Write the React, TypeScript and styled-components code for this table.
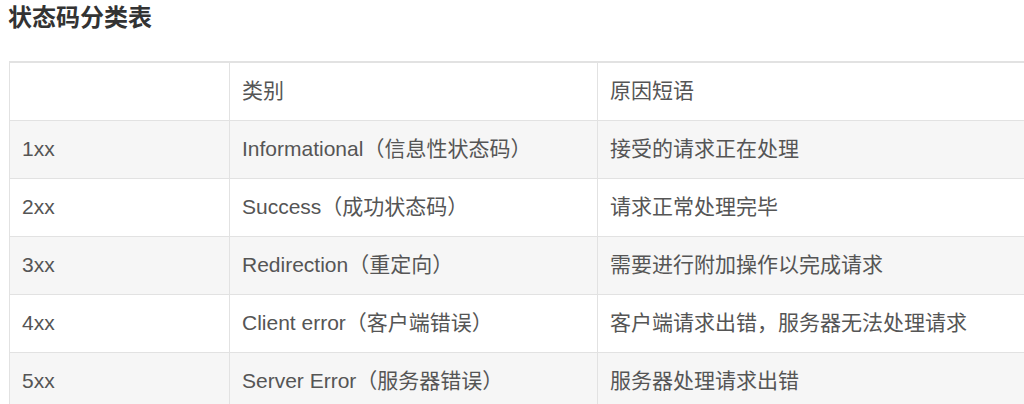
import React from 'react';
import styled, { createGlobalStyle } from 'styled-components';

const rows = [
    { code: '1xx', kind: 'Informational（信息性状态码）', reason: '接受的请求正在处理' },
    { code: '2xx', kind: 'Success（成功状态码）', reason: '请求正常处理完毕' },
    { code: '3xx', kind: 'Redirection（重定向）', reason: '需要进行附加操作以完成请求' },
    { code: '4xx', kind: 'Client error（客户端错误）', reason: '客户端请求出错，服务器无法处理请求' },
    { code: '5xx', kind: 'Server Error（服务器错误）', reason: '服务器处理请求出错' },
];

const App: React.FC = () => (
    <Page>
        <GlobalStyle />
        <Title>状态码分类表</Title>
        <TableClip>
            <Table>
                <colgroup>
                    <col style={{ width: 220 }} />
                    <col style={{ width: 368 }} />
                    <col />
                </colgroup>
                <tbody>
                    <Row $striped={false}>
                        <Cell />
                        <Cell>类别</Cell>
                        <Cell>原因短语</Cell>
                    </Row>
                    {rows.map((r, i) => (
                        <Row key={r.code} $striped={i % 2 === 0}>
                            <Cell>{r.code}</Cell>
                            <Cell>{r.kind}</Cell>
                            <Cell>{r.reason}</Cell>
                        </Row>
                    ))}
                </tbody>
            </Table>
        </TableClip>
    </Page>
);

const GlobalStyle = createGlobalStyle`
    html, body {
        margin: 0;
        padding: 0;
        background: #fff;
        overflow: hidden;
    }
`;

const Page = styled.div`
    padding: 0 0 0 9px;
    font-family: 'Liberation Sans', 'Noto Sans CJK SC', sans-serif;
    color: #555;
`;

const Title = styled.h3`
    margin: 0 0 25px -1px;
    font-size: 24px;
    line-height: 36px;
    font-weight: bold;
    color: #333;
`;

const TableClip = styled.div`
    overflow: hidden;
`;

const Table = styled.table`
    width: 1060px;
    border-collapse: collapse;
    table-layout: fixed;
    border-top: 2px solid #e2e2e2;
    border-left: 1px solid #e2e2e2;
`;

const Row = styled.tr<{ $striped: boolean }>`
    height: 58px;
    background: ${(p) => (p.$striped ? '#f6f6f6' : '#fff')};
`;

const Cell = styled.td`
    padding: 0 12px;
    border: 1px solid #e2e2e2;
    font-size: 21px;
    line-height: 30px;
    vertical-align: middle;
    white-space: nowrap;
    color: #555;
`;

export default App;
